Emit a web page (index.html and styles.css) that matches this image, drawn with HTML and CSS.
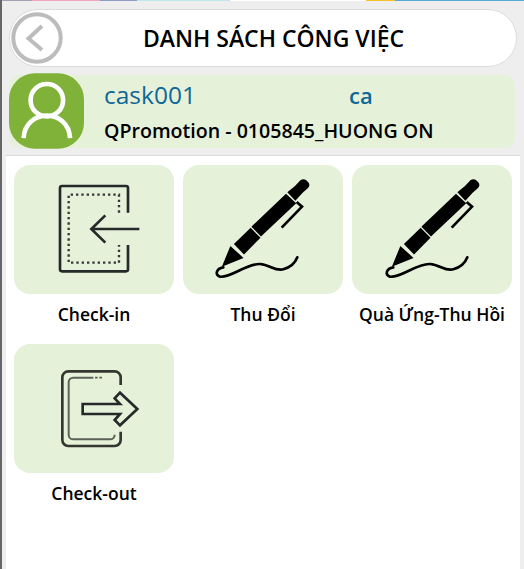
FILE: index.html
```html
<!DOCTYPE html>
<html lang="vi">
<head>
    <meta charset="UTF-8">
    <meta name="viewport" content="width=device-width, initial-scale=1.0">
    <title>Danh sách công việc</title>
    <link rel="stylesheet" href="styles.css">
</head>
<body>
    <div class="strip">
        <span class="s-grey"></span>
        <span class="s-pink"></span>
        <span class="s-violet"></span>
        <span class="s-cyan"></span>
        <span class="s-white"></span>
        <span class="s-yellow"></span>
        <span class="s-blue"></span>
    </div>
    <div class="page">
        <div class="header">
            <div class="back">
                <svg viewBox="0 0 52 52" width="52" height="52">
                    <circle cx="26" cy="26" r="23.7" fill="#fff" stroke="#bcbcbc" stroke-width="4"/>
                    <path d="M31 14 L17.500 26.500 L31 38" fill="none" stroke="#bcbcbc" stroke-width="4"/>
                </svg>
            </div>
            <div class="title">DANH SÁCH CÔNG VIỆC</div>
        </div>
        <div class="info">
            <svg class="avatar" viewBox="27 220 226 227" width="75" height="76">
                <rect x="27" y="220" width="226" height="227" rx="78" fill="#80b138"/>
                <circle cx="141" cy="301" r="49" fill="none" stroke="#fff" stroke-width="14"/>
                <path d="M71 415 C76 325 206 325 211 415" fill="none" stroke="#fff" stroke-width="14"/>
            </svg>
            <div class="info-text">
                <div class="info-top">
                    <span class="user">cask001</span>
                    <span class="shift">ca</span>
                </div>
                <div class="shop">QPromotion - 0105845_HUONG ON</div>
            </div>
        </div>
        <div class="panel">
            <div class="grid">
                <div class="item">
                    <div class="card">
                        <svg viewBox="12 15 480 387">
                            <path d="M354 158 V84 a6 6 0 0 0 -6 -6 H156 a6 6 0 0 0 -6 6 V328 a6 6 0 0 0 6 6 H348 a6 6 0 0 0 6 -6 V255" fill="none" stroke="#26292a" stroke-width="8"/>
                            <path d="M327 158 V104 H176 V308 H327 V255" fill="none" stroke="#33363a" stroke-width="7" stroke-dasharray="7 9"/>
                            <path d="M388 207 H244 M286 166 L244 207 L286 248" fill="none" stroke="#26292a" stroke-width="8"/>
                        </svg>
                    </div>
                    <div class="label">Check-in</div>
                </div>
                <div class="item">
                    <div class="card">
                        <svg viewBox="9 15 480 387">
                            <use href="#pen"/>
                        </svg>
                    </div>
                    <div class="label">Thu Đổi</div>
                </div>
                <div class="item">
                    <div class="card">
                        <svg viewBox="6 15 480 387">
                            <use href="#pen"/>
                        </svg>
                    </div>
                    <div class="label">Quà Ứng-Thu Hồi</div>
                </div>
                <div class="item">
                    <div class="card">
                        <svg viewBox="12 12 480 387">
                            <path d="M332 135 V112 a18 18 0 0 0 -18 -18 H175 a18 18 0 0 0 -18 18 V300 a18 18 0 0 0 18 18 H314 a18 18 0 0 0 18 -18 V275" fill="none" stroke="#33372f" stroke-width="8"/>
                            <path d="M250 113 H190 a14 14 0 0 0 -14 14 V284 a14 14 0 0 0 14 14 H300 a14 14 0 0 0 14 -14" fill="none" stroke="#5c6258" stroke-width="6"/>
                            <path d="M255 113 H280" fill="none" stroke="#5c6258" stroke-width="5" stroke-dasharray="8 5"/>
                            <path d="M218 192 H330 L314 175 L330 158 L382 207 L330 256 L314 240 L330 222 H218 Z" fill="none" stroke="#26292a" stroke-width="8"/>
                        </svg>
                    </div>
                    <div class="label">Check-out</div>
                </div>
            </div>
        </div>
    </div>

    <svg class="defs" width="0" height="0">
        <defs>
            <g id="pen">
                <polygon points="130,316 152,262 186,293" stroke="#000" stroke-width="5"/>
                <polygon points="165,252 212,207 238,233 192,280" stroke="#000" stroke-width="5"/>
                <polygon points="218,200 318,105 345,130 243,226" stroke="#000" stroke-width="5"/>
                <path d="M322 97 L345 78 L362 60 Q370 55 378 60 L386 68 Q391 76 384 84 L368 98 L346 122 Z"/>
                <path d="M350 126 L366 140 L305 203" fill="none" stroke="#000" stroke-width="8"/>
                <path d="M130 322 C108 325 104 346 120 350 C150 355 200 310 240 312 C270 314 285 335 310 328 C332 322 345 310 352 292" fill="none" stroke="#000" stroke-width="8" stroke-linecap="round"/>
            </g>
        </defs>
    </svg>
</body>
</html>
```

FILE: styles.css
```css
:root {
    --page-bg: #eeeeee;
    --card-bg: #e6f1da;
    --blue-text: #0f6796;
}

body {
    margin: 0;
    height: 569px;
    overflow: hidden;
    font-family: "Open Sans", "Noto Sans", sans-serif;
    background: var(--page-bg);
    color: #000;
    border-left: 2px solid #666;
    box-sizing: border-box;
}

.strip {
    display: flex;
    height: 1px;
    margin-left: -2px;
}

.strip span {
    display: block;
}

.s-grey { width: 32px; background: #a79fb5; }
.s-pink { width: 68px; background: #f4a3bf; }
.s-violet { width: 37px; background: #8f9cc8; }
.s-cyan { width: 93px; background: #bfe8ee; }
.s-white { width: 136px; background: #fff; }
.s-yellow { width: 29px; background: #fbbf2d; }
.s-blue { width: 129px; background: #58a9d8; }

.page {
    display: flex;
    flex-direction: column;
    height: 568px;
}

.header {
    position: relative;
    display: flex;
    align-items: center;
    justify-content: center;
    box-sizing: border-box;
    height: 58px;
    margin: 8px 7px 0 7px;
    background: #fff;
    border: 1px solid #dcdcdc;
    border-radius: 29px;
}

.back {
    position: absolute;
    left: 1px;
    top: 2px;
    line-height: 0;
}

.title {
    font-size: 23px;
    font-weight: 600;
    margin-left: 21px;
}

.info {
    display: flex;
    align-items: center;
    height: 73px;
    margin: 8px 9px 0 7px;
    background: var(--card-bg);
    border-radius: 10px;
}

.avatar {
    flex: none;
    margin-bottom: 1px;
}

.info-text {
    margin-left: 20px;
}

.info-top {
    display: flex;
    align-items: baseline;
    margin-top: -1px;
}

.user {
    width: 245px;
    font-size: 24.500px;
    font-weight: 500;
    color: var(--blue-text);
}

.shift {
    font-size: 22px;
    font-weight: 600;
    color: var(--blue-text);
}

.shop {
    font-size: 19.600px;
    font-weight: 600;
    margin-top: 6px;
}

.panel {
    flex: 1;
    margin: 7px 4px 0 4px;
    padding: 9px 0 0 8px;
    background: #fff;
    border-top: 1px solid #dcdcdc;
}

.grid {
    display: grid;
    grid-template-columns: repeat(3, 160px);
    grid-auto-rows: 179px;
    column-gap: 9px;
}

.card {
    height: 129px;
    background: var(--card-bg);
    border-radius: 16px;
    line-height: 0;
}

.card svg {
    width: 160px;
    height: 129px;
}

.label {
    margin-top: 8px;
    font-size: 17.500px;
    font-weight: 600;
    text-align: center;
    white-space: nowrap;
}

.defs {
    position: absolute;
}
```
